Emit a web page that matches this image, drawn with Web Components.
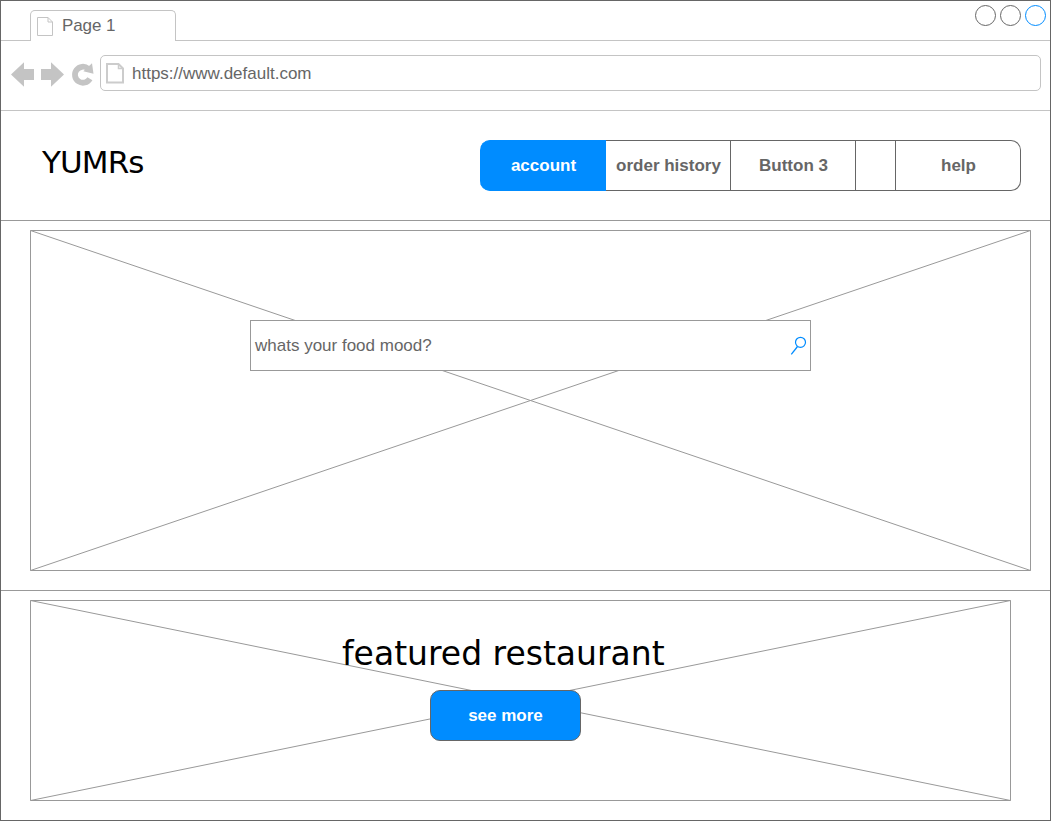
<!DOCTYPE html>
<html lang="en">
<head>
<meta charset="utf-8">
<title>YUMRs</title>
<style>
html, body { margin: 0; background: #fff; }
body { font: 17px/20px "Liberation Sans", Arial, Helvetica, sans-serif; color: #666; overflow: hidden; }
yum-hero, yum-featured { --line: #999; }
</style>
</head>
<body>
<yum-window>
  <yum-tabs>Page 1</yum-tabs>
  <yum-toolbar>https://www.default.com</yum-toolbar>
  <yum-header>
    <span slot="brand">YUMRs</span>
    <yum-button selected style="width:126px">account</yum-button>
    <yum-button style="width:125px">order history</yum-button>
    <yum-button style="width:125px">Button 3</yum-button>
    <yum-button style="width:40px"></yum-button>
    <yum-button last style="width:125px">help</yum-button>
  </yum-header>
  <yum-hero><yum-search>whats your food mood?</yum-search></yum-hero>
  <yum-featured><span slot="title">featured restaurant</span>see more</yum-featured>
</yum-window>
<script>
const define = (name, html) => customElements.define(name, class extends HTMLElement {
  constructor() {
    super();
    this.attachShadow({ mode: "open" }).innerHTML = "<style>*{box-sizing:border-box}:host{box-sizing:border-box}svg{display:block;flex:none}</style>" + html;
  }
});

define("yum-window", `<style>
  :host { display: flex; flex-direction: column; width: 1051px; height: 821px; border: 1px solid #666; background: #fff; }
</style><slot></slot>`);

define("yum-tabs", `<style>
  :host { display: flex; height: 40px; flex: none; padding-top: 9px; background: linear-gradient(#c4c4c4, #c4c4c4) 0 100% / 100% 1px no-repeat; }
  .tab { display: flex; width: 146px; height: 31px; margin-left: 29px; padding-left: 6px; border: 1px solid #c4c4c4; border-bottom: 0; border-radius: 5px 5px 0 0; background: #fff; }
  .tab svg { margin-top: 6px; }
  .name { margin: 5px 0 0 9px; letter-spacing: -.1px; }
  .dots { margin: -6px 3px 0 auto; }
</style>
<div class="tab">
  <svg width="16" height="19" fill="none" stroke="#c4c4c4"><path d="M.5.5h10.500l4.500 4.500v13.500h-15zM11 .5v4.500h4.500"/></svg>
  <span class="name"><slot></slot></span>
</div>
<svg class="dots" width="72" height="22" fill="none" stroke="#666"><circle cx="10.500" cy="11.500" r="10"/><circle cx="35.500" cy="11.500" r="10"/><circle cx="60.500" cy="11.500" r="10" stroke="#008cff"/></svg>`);

define("yum-toolbar", `<style>
  :host { display: flex; align-items: flex-start; height: 70px; flex: none; padding: 14px 9px 0 10px; border-bottom: 1px solid #c4c4c4; }
  .nav { margin-top: 7px; }
  .bar { display: flex; flex: 1; height: 36px; margin-left: 6px; padding-left: 5px; border: 1px solid #c4c4c4; border-radius: 5px; }
  .bar svg { margin-top: 7px; }
  .url { margin: 8px 0 0 8px; }
</style>
<svg class="nav" width="83" height="26" fill="#c4c4c4">
  <path d="M0 12.500L13 .3V7h10v11H13v6.700zM53 12.500L40 .3V7H30v11h10v6.700z"/>
  <path d="M78.900 16.700A8 8 0 1 1 77.100 6.600" fill="none" stroke="#c4c4c4" stroke-width="5.800"/>
  <path d="M81 1.300l1.500 10.400-10.200-2.400z"/>
</svg>
<div class="bar">
  <svg width="18" height="21" fill="none" stroke="#ccc" stroke-width="2"><path d="M1 1h11.500L17 5.500V19.500H1z"/><path d="M12.500 1v4.500H17" stroke-width="1.500"/></svg>
  <span class="url"><slot></slot></span>
</div>`);

define("yum-header", `<style>
  :host { display: flex; justify-content: space-between; height: 110px; flex: none; padding: 29px 29px 0 41px; border-bottom: 1px solid #999; }
  .brand { margin-top: 1px; font: 31px/42px Verdana, "DejaVu Sans", sans-serif; letter-spacing: -.9px; color: #000; }
  nav { display: flex; }
</style><div class="brand"><slot name="brand"></slot></div><nav><slot></slot></nav>`);

define("yum-button", `<style>
  :host { display: flex; align-items: center; justify-content: center; height: 51px; padding-left: 1px; border: solid #666; border-width: 1px 1px 1px 0; font-weight: 700; white-space: nowrap; }
  :host([selected]) { padding-left: 2px; background: #008cff; border-color: #008cff; color: #fff; border-radius: 10px 0 0 10px; }
  :host([last]) { border-radius: 0 10px 10px 0; }
</style><slot></slot>`);

define("yum-hero", `<style>
  :host { display: block; height: 370px; flex: none; padding: 9px 0 0 29px; border-bottom: 1px solid var(--line); }
  .box { display: grid; width: 1001px; height: 341px; }
  .box > * { grid-area: 1 / 1; }
  .field { position: relative; margin: 90px 0 0 220px; }
</style><div class="box">
<svg width="1001" height="341" fill="none" stroke="#999"><path d="M.5.5h1000v340H.5zL1000.500 340.500M1000.500.5L.5 340.500"/></svg>
<div class="field"><slot></slot></div></div>`);

define("yum-search", `<style>
  :host { display: flex; justify-content: space-between; width: 561px; height: 51px; padding: 15px 3px 0 4px; border: 1px solid #999; background: #fff; }
</style><span><slot></slot></span>
<svg width="17" height="20" fill="none" stroke="#008cff" stroke-width="1.200"><circle cx="10.500" cy="6.300" r="5"/><path d="M7.500 10.500L1.300 18.300" stroke-width="1.300"/></svg>`);

define("yum-featured", `<style>
  :host { display: block; flex: 1; padding: 9px 0 0 29px; }
  .box { display: grid; width: 981px; height: 201px; }
  .box > * { grid-area: 1 / 1; }
  .copy { position: relative; width: 324px; margin: 33px 0 0 312px; }
  .title { font: 33px/42px Verdana, "DejaVu Sans", sans-serif; color: #000; white-space: nowrap; }
  button { display: block; width: 151px; height: 51px; margin: 15px 0 0 88px; padding: 0; border: 1px solid #666; border-radius: 10px; background: #008cff; color: #fff; font: inherit; font-weight: 700; }
</style><div class="box">
<svg width="981" height="201" fill="none" stroke="#999"><path d="M.5.5h980v200H.5zL980.500 200.500M980.500.5L.5 200.500"/></svg>
<div class="copy"><div class="title"><slot name="title"></slot></div><button><slot></slot></button></div></div>`);
</script>
</body>
</html>
